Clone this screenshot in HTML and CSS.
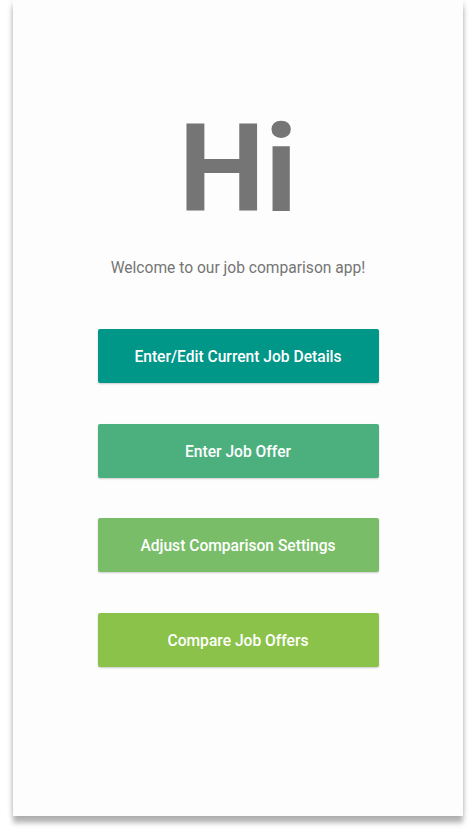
FILE: index.html
```html
<!DOCTYPE html>
<html lang="en">
<head>
<meta charset="utf-8">
<title>Job Comparison</title>
<link rel="stylesheet" href="styles.css">
</head>
<body>
<main class="screen">
  <h1 class="hi">Hi</h1>
  <p class="welcome">Welcome to our job comparison app!</p>
  <nav class="actions">
    <button class="btn btn-teal">Enter/Edit Current Job Details</button>
    <button class="btn btn-green">Enter Job Offer</button>
    <button class="btn btn-lightgreen">Adjust Comparison Settings</button>
    <button class="btn btn-lime">Compare Job Offers</button>
  </nav>
</main>
</body>
</html>
```

FILE: styles.css
```css
html, body {
  margin: 0;
  padding: 0;
  background: #ffffff;
}

body {
  font-family: Roboto, "Noto Sans", sans-serif;
  height: 833px;
  overflow: hidden;
}

.screen {
  box-sizing: border-box;
  width: 450px;
  height: 816px;
  margin-left: 13px;
  background: #fdfdfd;
  box-shadow: 0 7px 5px rgba(0, 0, 0, 0.28), 0 0 6px rgba(0, 0, 0, 0.12);
  display: flex;
  flex-direction: column;
  align-items: center;
  padding-top: 109px;
}

.hi {
  margin: 0;
  font-size: 122px;
  line-height: 122px;
  font-weight: 700;
  color: #757575;
  letter-spacing: 0;
}

.welcome {
  margin: 27px 0 0;
  font-size: 15.6px;
  line-height: 20px;
  color: #757575;
}

.actions {
  margin-top: 51px;
  display: flex;
  flex-direction: column;
  gap: 40.5px;
}

.btn {
  width: 281px;
  height: 54px;
  border: none;
  border-radius: 2px;
  color: #ffffff;
  font-family: Roboto, "Noto Sans", sans-serif;
  font-size: 15.6px;
  font-weight: 500;
  box-shadow: 0 1px 2px rgba(0, 0, 0, 0.2);
  padding: 2px 0 0;
}

.btn-teal { background: #009688; }
.btn-green { background: #4caf7e; }
.btn-lightgreen { background: #79bd69; }
.btn-lime { background: #8bc34a; }
```
